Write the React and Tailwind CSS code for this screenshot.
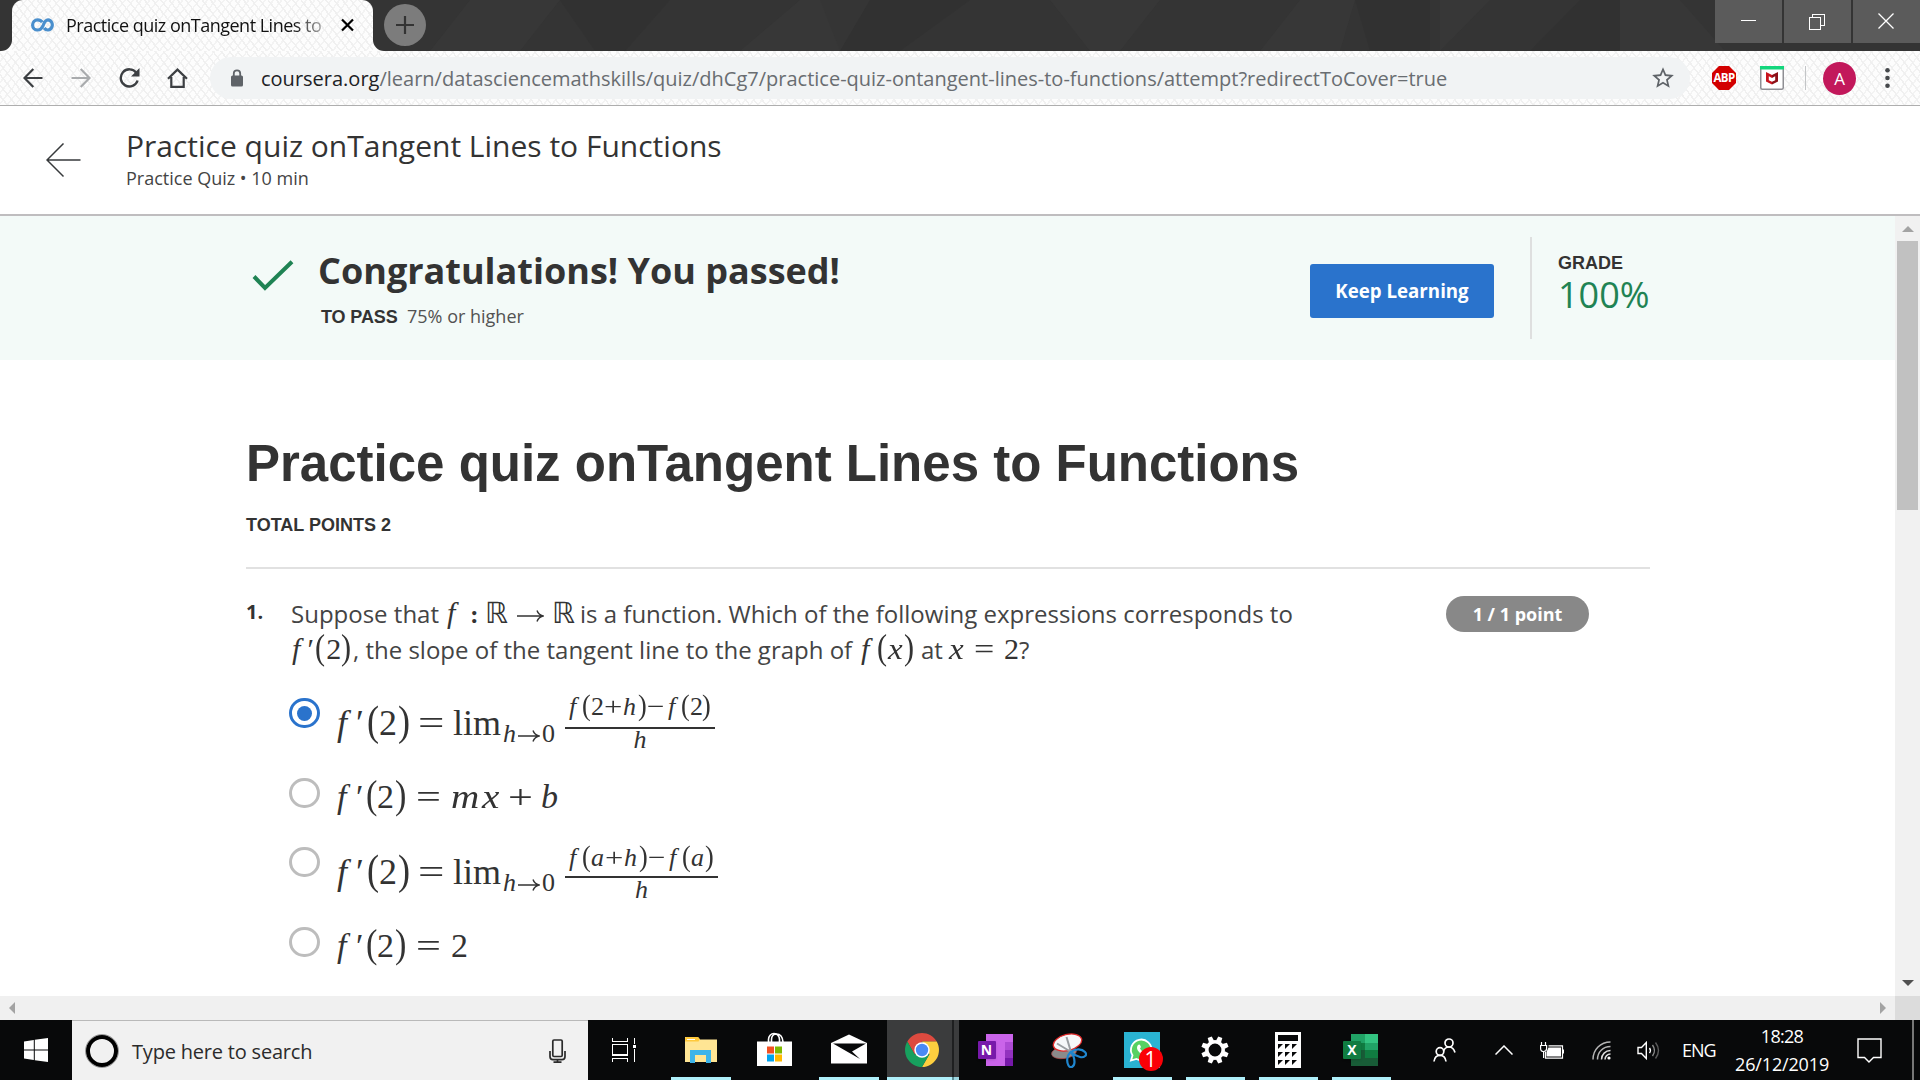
import React from "react";

/* ---------- browser chrome ---------- */

const weave =
  "bg-[#fdfdfd] bg-[repeating-linear-gradient(52deg,transparent_0px,transparent_5px,#f0f0f0_5px,#f0f0f0_6.5px),repeating-linear-gradient(-52deg,transparent_0px,transparent_5px,#f3f3f3_5px,#f3f3f3_6.5px)]";

function CourseraMark() {
  return (
    <svg width="23" height="14" viewBox="0 0 23 14" fill="none" stroke="#4a8fcd" strokeWidth="3.2">
      <path d="M11.300 4.200C10.200 2.600 8.500 1.800 6.600 1.800A4.900 5 0 0 0 6.600 12c3.200 0 4.600-2.200 5.600-4.700C13 5 14.200 1.800 17 1.800A4.500 5.100 0 1 1 13.200 10" />
    </svg>
  );
}

function TitleBar() {
  return (
    <div className="relative flex h-[51px] bg-[#343434]">
      <svg className="absolute inset-0" width="1920" height="51" viewBox="0 0 1920 51">
        <g fill="#2e2e2e" opacity="0.45">
          <path d="M560 0h110l-45 51h-30zM820 0h150l-70 51h-60zM1355 0h75v51h-60zM1530 51l50-51h40v51z" />
        </g>
        <g fill="#3b3b3b" opacity="0.4">
          <path d="M430 51l40-51h90l-40 51zM740 51l60-51h70l-30 51zM1050 0h110l-40 51h-30zM1260 51l40-51h55l-15 51zM1440 0h50l-50 51zM1620 0h60l45 51h-105z" />
        </g>
      </svg>
      <div className="relative flex w-full">
        <div className="h-[51px] w-3 bg-[#fdfdfd]">
          <div className="h-full w-full rounded-br-[11px] bg-[#343434]" />
        </div>
        <div className={`flex h-[51px] w-[361px] items-center rounded-t-[11px] pb-[2px] pl-[19px] ${weave}`}>
          <CourseraMark />
          <div className="ml-[12px] w-[258px] overflow-hidden whitespace-nowrap bg-[linear-gradient(90deg,#111_88%,#11111150_100%)] bg-clip-text text-[18px] leading-[28px] tracking-[-0.5px] text-transparent">
            Practice quiz onTangent Lines to
          </div>
          <svg className="ml-[17px]" width="13" height="14" viewBox="0 0 13 14" stroke="#000" strokeWidth="2.2">
            <path d="M1 1.500l11 11M12 1.500l-11 11" />
          </svg>
        </div>
        <div className="h-[51px] w-3 bg-[#fdfdfd]">
          <div className="h-full w-full rounded-bl-[11px] bg-[#343434]" />
        </div>
        <div className="ml-[-1px] mt-1 flex h-[42px] w-[42px] items-center justify-center rounded-full bg-[#7c7c7c]">
          <svg width="18" height="18" viewBox="0 0 18 18" stroke="#333" strokeWidth="2.2">
            <path d="M9 0v18M0 9h18" />
          </svg>
        </div>
        <div className="ml-auto flex h-[43px] gap-[2px]">
          <div className="flex w-[67px] items-center justify-center bg-[#5b5b5b]">
            <svg width="15" height="15" viewBox="0 0 15 15" shapeRendering="crispEdges">
              <path d="M0 6.500h15" stroke="#fff" />
            </svg>
          </div>
          <div className="flex w-[67px] items-center justify-center bg-[#5b5b5b] pr-[2px]">
            <svg width="16" height="16" viewBox="0 0 16 16" fill="none" stroke="#fff" shapeRendering="crispEdges">
              <path d="M.5 3.500h11v12h-11zM3.500 3.500v-3h12v11h-4" />
            </svg>
          </div>
          <div className="flex w-[67px] items-center justify-center bg-[#5b5b5b] pb-[1px] pr-[2px]">
            <svg width="16" height="16" viewBox="0 0 16 16" stroke="#fff" strokeWidth="1.300">
              <path d="M.5.5l15 15M15.500.5l-15 15" />
            </svg>
          </div>
        </div>
      </div>
    </div>
  );
}

function Toolbar() {
  return (
    <div className={`flex h-[55px] items-center border-b border-[#aeaeae] pl-[23px] ${weave}`}>
      <svg width="20" height="20" viewBox="0 0 20 20" fill="none" stroke="#3c3f42" strokeWidth="2.2">
        <path d="M19.500 10H1.800M10.300 1L1.500 10l8.800 9" />
      </svg>
      <svg className="ml-[28px]" width="20" height="20" viewBox="0 0 20 20" fill="none" stroke="#a9abad" strokeWidth="2.2">
        <path d="M.5 10h17.700M9.700 1l8.800 9-8.800 9" />
      </svg>
      <svg className="ml-[28px]" width="21" height="20" viewBox="0 0 21 20" fill="none" stroke="#3c3f42" strokeWidth="2.4">
        <path d="M17.300 4.800A8.600 8.600 0 1 0 18.600 12.500" />
        <path d="M20.500 0v8.500h-8.500z" fill="#3c3f42" stroke="none" />
      </svg>
      <svg className="ml-[27px]" width="21" height="20" viewBox="0 0 21 20" fill="none" stroke="#3c3f42" strokeWidth="2.2">
        <path d="M1 10.800L10.500 1.600l9.500 9.200M4.300 9v9.800h12.400V9" />
      </svg>
      <div className="ml-[22px] flex h-[42px] w-[1480px] items-center rounded-full bg-[#f1f3f4] pl-[20px]">
        <svg width="14" height="18" viewBox="0 0 14 18">
          <rect x="1" y="6.500" width="12" height="11" rx="1.500" fill="#5f6368" />
          <path d="M3.800 7V4.500a3.200 3.200 0 0 1 6.400 0V7" fill="none" stroke="#5f6368" strokeWidth="1.800" />
        </svg>
        <span className="ml-[17px] mt-[2px] whitespace-nowrap text-[20px] leading-[28px] text-[#696d71]">
          <span className="text-[#202124]">coursera.org</span>
          /learn/datasciencemathskills/quiz/dhCg7/practice-quiz-ontangent-lines-to-functions/attempt?redirectToCover=true
        </span>
        <svg className="ml-auto mr-[14px]" width="26" height="26" viewBox="0 0 24 24" fill="#5f6368">
          <path d="M22 9.240l-7.190-.62L12 2 9.190 8.630 2 9.240l5.460 4.730L5.820 21 12 17.270 18.180 21l-1.630-7.030L22 9.240zM12 15.400l-3.760 2.270 1-4.280-3.320-2.880 4.380-.38L12 6.100l1.710 4.040 4.380.38-3.320 2.880 1 4.280L12 15.400z" />
        </svg>
      </div>
      <div className="ml-[22px] flex h-6 w-6 items-center justify-center bg-[#d30000] text-[11.500px] font-bold leading-none tracking-[-0.6px] text-white [clip-path:polygon(29%_0,71%_0,100%_29%,100%_71%,71%_100%,29%_100%,0_71%,0_29%)]">
        ABP
      </div>
      <svg className="ml-6" width="24" height="24" viewBox="0 0 24 24">
        <rect x=".75" y=".75" width="22.500" height="22.500" rx="1.500" fill="#fff" stroke="#8f8f94" strokeWidth="1.500" />
        <path d="M0 0h24v3.500H0z" fill="#12d67c" />
        <path d="M6 6l6 3v9.500l-6-3z" fill="#c8141e" />
        <path d="M12 9l6-3v9.500l-6 3z" fill="#8d1118" />
        <path d="M8.800 10.300l3.200 1.700 3.200-1.700v3.900l-3.200 1.500-3.200-1.500z" fill="#fff" />
      </svg>
      <div className="ml-[21px] h-6 w-px bg-[#c3c5c7]" />
      <div className="ml-[17px] flex h-[33px] w-[33px] items-center justify-center rounded-full bg-[#c2185b] text-[17px] leading-none text-white">
        A
      </div>
      <svg className="ml-[29px]" width="5" height="20" viewBox="0 0 5 20" fill="#45484b">
        <circle cx="2.500" cy="2.300" r="2.300" />
        <circle cx="2.500" cy="10" r="2.300" />
        <circle cx="2.500" cy="17.700" r="2.300" />
      </svg>
    </div>
  );
}

/* ---------- math typesetting ---------- */

const T = ({ c, children }) => <span className={`inline-block ${c}`}>{children}</span>;

const Arrow = ({ w, h = 12 }) => (
  <svg className="inline-block align-baseline" width={w} height={h} viewBox={`0 0 ${w} ${h}`} fill="none" stroke="#333" strokeWidth="1.4">
    <path d={`M0 ${h / 2}H${w - 1}M${w - 7} ${h / 2 - 5.5}q1.500 4.300 6 5.500q-4.500 1.200-6 5.500`} />
  </svg>
);

function Radio({ checked, c }) {
  return (
    <div
      className={`ml-[-2px] flex h-[30px] w-[31px] shrink-0 items-center justify-center rounded-full border-[3px] ${
        checked ? "border-[#2a73cc]" : "border-[#bdbdbd]"
      } ${c}`}
    >
      {checked && <div className="h-[15px] w-[15px] rounded-full bg-[#2a73cc]" />}
    </div>
  );
}

const paren = "text-[1.17em] leading-[0.7] origin-left scale-x-[.86]";

/* f′(2) = lim h→0 with the fraction placed after it */
function Limit({ c, num, den, bar }) {
  return (
    <>
      <div className={`ml-4 w-[229px] shrink-0 whitespace-nowrap text-[36px] leading-[40px] ${c}`}>
        <T c="w-[20px] pl-[1px] italic">f</T>
        <T c="w-[11px] text-[36px] leading-[0.8]">′</T>
        <T c={`w-[12px] ${paren}`}>(</T>
        <T c="w-[19px]">2</T>
        <T c={`w-[20px] ${paren}`}>)</T>
        <T c="w-[35px] origin-left scale-x-[1.3]">=</T>
        <T c="w-[50px]">lim</T>
        <T c="w-[15px] align-[-7px] text-[26px] italic leading-none">h</T>
        <T c="w-[24px] align-[-7px] text-[26px] leading-none">
          <Arrow w={22} />
        </T>
        <T c="align-[-7px] text-[26px] leading-none">0</T>
      </div>
      <div className={`flex flex-col items-center ${bar}`}>
        {num}
        <div className="h-[2px] w-full bg-[#333]" />
        <div className={`text-[26px] italic ${den}`}>h</div>
      </div>
    </>
  );
}

function Numerator({ a, b, ac, bc, c }) {
  return (
    <div className={`w-full whitespace-nowrap pl-[3px] text-[26px] leading-[26px] ${c}`}>
      <T c="w-[14px] pl-px italic">f</T>
      <T c={`w-[9px] ${paren}`}>(</T>
      <T c={ac}>{a}</T>
      <T c="w-[19px] origin-left scale-x-[1.25]">+</T>
      <T c="w-[15px] italic">h</T>
      <T c={`w-[9px] ${paren}`}>)</T>
      <T c="w-[20px] origin-left scale-x-[1.2]">−</T>
      <T c="w-[14px] pl-px italic">f</T>
      <T c={`w-[9px] ${paren}`}>(</T>
      <T c={bc}>{b}</T>
      <T c={paren}>)</T>
    </div>
  );
}

const FPrimeTwoEq = () => (
  <>
    <T c="w-[20px] pl-[1px] italic">f</T>
    <T c="w-[10px] text-[34px] leading-[0.8]">′</T>
    <T c={`w-[11px] ${paren}`}>(</T>
    <T c="w-[18px]">2</T>
    <T c={`w-[21px] ${paren}`}>)</T>
    <T c="w-[35px] origin-left scale-x-[1.3]">=</T>
  </>
);

function Question() {
  return (
    <div className="flex">
      <div className="mt-[25px] w-[45px] text-[20px] font-bold leading-[36px] text-[#333]">1.</div>
      <div className="mt-[27px] w-[1155px]">
        <div className="flex h-[36px] items-baseline whitespace-nowrap text-[24px] leading-[36px] text-[#444]">
          <span className="w-[155px]">Suppose that</span>
          <div className="flex items-baseline font-[Liberation_Serif] text-[30px] leading-none text-[#333]">
            <T c="w-[24px] pl-[1px] italic">f</T>
            <T c="w-[15px] text-[26px] font-bold">:</T>
            <T c="w-[32px] font-[DejaVu_Sans] text-[29px] leading-[0.8]">ℝ</T>
            <T c="w-[35px]">
              <Arrow w={27} h={14} />
            </T>
            <T c="w-[28px] font-[DejaVu_Sans] text-[29px] leading-[0.8]">ℝ</T>
          </div>
          <span>is a function. Which of the following expressions corresponds to</span>
        </div>
        <div className="flex h-[36px] items-baseline whitespace-nowrap text-[24px] leading-[36px] text-[#444]">
          <div className="flex w-[62px] items-baseline font-[Liberation_Serif] text-[30px] leading-none text-[#333]">
            <T c="w-[17px] pl-[1px] italic">f</T>
            <T c="w-[8px] text-[30px] leading-[0.8]">′</T>
            <T c={`w-[11px] ${paren}`}>(</T>
            <T c="w-[15px]">2</T>
            <T c={paren}>)</T>
          </div>
          <span className="w-[507px]">, the slope of the tangent line to the graph of</span>
          <div className="flex w-[61px] items-baseline font-[Liberation_Serif] text-[30px] leading-none text-[#333]">
            <T c="w-[17px] pl-[1px] italic">f</T>
            <T c={`w-[11px] ${paren}`}>(</T>
            <T c="w-[16px] origin-left scale-x-[1.1] italic">x</T>
            <T c={paren}>)</T>
          </div>
          <span className="w-[28px]">at</span>
          <div className="flex items-baseline font-[Liberation_Serif] text-[30px] leading-none text-[#333]">
            <T c="w-[25px] origin-left scale-x-[1.1] italic">x</T>
            <T c="w-[30px] origin-left scale-x-[1.2]">=</T>
            <T c="w-[15px]">2</T>
          </div>
          <span>?</span>
        </div>

        <div className="mt-[22px] font-[Liberation_Serif] text-[#333]">
          <div className="flex h-[80px] items-start">
            <Radio checked c="mt-2" />
            <Limit
              c="mt-[13px]"
              bar="mt-[4px] w-[150px]"
              num={<Numerator c="mb-[7px]" a="2" b="2" ac="w-[13px]" bc="w-[12px]" />}
              den="leading-[22px]"
            />
          </div>
          <div className="flex h-[64px] items-start">
            <Radio c="mt-2" />
            <div className="ml-4 mt-[7px] whitespace-nowrap text-[34px] leading-[40px]">
              <FPrimeTwoEq />
              <T c="w-[31px] origin-left scale-x-[1.15] italic">m</T>
              <T c="w-[26px] origin-left scale-x-[1.15] italic">x</T>
              <T c="w-[33px] origin-left scale-x-[1.3]">+</T>
              <T c="italic">b</T>
            </div>
          </div>
          <div className="flex h-[86px] items-start">
            <Radio c="mt-[13px]" />
            <Limit
              c="mt-[18px]"
              bar="mt-[11px] w-[153px]"
              num={<Numerator c="mb-[5px]" a="a" b="a" ac="w-[14px] italic" bc="w-[14px] italic" />}
              den="leading-[24px]"
            />
          </div>
          <div className="flex h-[64px] items-start">
            <Radio c="mt-[7px]" />
            <div className="ml-4 mt-[6px] whitespace-nowrap text-[34px] leading-[40px]">
              <FPrimeTwoEq />
              <T c="">2</T>
            </div>
          </div>
        </div>
      </div>
      <div className="mt-[27px] flex h-9 w-[143px] items-center justify-center rounded-full bg-[#888] text-[18px] font-bold text-white">
        1 / 1 point
      </div>
    </div>
  );
}

/* ---------- page ---------- */

function PageHeader() {
  return (
    <div className="flex h-[110px] border-b-2 border-[#bfbdbf] bg-white pl-[46px]">
      <svg className="mt-[37px]" width="35" height="35" viewBox="0 0 35 35" fill="none" stroke="#373a3c" strokeWidth="1.5">
        <path d="M34.500 17H1M17.500.5L1 17l16.500 16.500" />
      </svg>
      <div className="ml-[45px] pt-[20px]">
        <div className="text-[30px] leading-[40px] text-[#333]">Practice quiz onTangent Lines to Functions</div>
        <div className="text-[18px] leading-[24px] text-[#444]">Practice Quiz • 10 min</div>
      </div>
    </div>
  );
}

function ResultBanner() {
  return (
    <div className="flex h-[144px] bg-[#f3faf8] pl-[252px]">
      <svg className="mt-[44px]" width="42" height="32" viewBox="0 0 42 32" fill="none" stroke="#1f8354" strokeWidth="4">
        <path d="M2 16.500L13 28 40 1.800" />
      </svg>
      <div className="ml-[24px] w-[992px] pt-[31px]">
        <div className="text-[36px] font-bold leading-[48px] text-[#333]">Congratulations! You passed!</div>
        <div className="mt-[9px] flex items-baseline pl-[3px] text-[18px] leading-[24px]">
          <span className="w-[86px] font-[Liberation_Sans] font-bold tracking-[-0.1px] text-[#333]">TO PASS</span>
          <span className="text-[#525252]">75% or higher</span>
        </div>
      </div>
      <div className="mt-[48px] flex h-[54px] w-[184px] items-center justify-center rounded-[3px] bg-[#2a73cc] text-[18.7px] font-bold text-white">
        Keep Learning
      </div>
      <div className="ml-[36px] mt-[21px] h-[102px] w-[2px] bg-[#dedfdf]" />
      <div className="ml-[26px] pt-[36px]">
        <div className="font-[Liberation_Sans] text-[18px] font-bold leading-[22px] text-[#333]">GRADE</div>
        <div className="mt-px text-[36px] leading-[40px] text-[#1f8354]">100%</div>
      </div>
    </div>
  );
}

function VerticalScroll() {
  return (
    <div className="flex w-[25px] flex-col items-center bg-[#f1f1f1]">
      <svg className="mt-[10px]" width="12" height="6" viewBox="0 0 12 6">
        <path d="M0 6L6 0l6 6z" fill="#a3a3a3" />
      </svg>
      <div className="mt-[9px] h-[269px] w-[21px] bg-[#c1c1c1]" />
      <svg className="mb-[10px] mt-auto" width="12" height="6" viewBox="0 0 12 6">
        <path d="M0 0h12L6 6z" fill="#505050" />
      </svg>
    </div>
  );
}

/* ---------- taskbar ---------- */

function Cell({ c = "w-[73px] pr-[2px]", bar, children }) {
  return (
    <div className={`relative flex h-full items-center justify-center ${c}`}>
      {children}
      {bar && <div className={`absolute bottom-0 h-[3px] bg-[#aeeffa] ${bar}`} />}
    </div>
  );
}

function Office({ letter, tile, cells }) {
  return (
    <div className="relative h-8 w-[35px]">
      <svg width="35" height="32" viewBox="0 0 35 32">
        {cells.map(([x, y, w, h, f], i) => (
          <rect key={i} x={x} y={y} width={w} height={h} fill={f} />
        ))}
      </svg>
      <div className={`absolute left-0 top-[7px] flex h-[18px] w-[18px] items-center justify-center rounded-[1px] text-[14px] font-bold leading-none text-white shadow ${tile}`}>
        {letter}
      </div>
    </div>
  );
}

function Taskbar() {
  return (
    <div className="flex h-[60px] bg-[#08090a] text-white">
      <div className="flex w-[72px] items-center justify-center">
        <svg width="24" height="24" viewBox="0 0 24 24" fill="#fff">
          <path d="M0 3.400L9.800 2v9.500H0zM10.800 1.800L24 0v11.500H10.800zM0 12.500h9.800V22L0 20.600zM10.800 12.500H24V24l-13.200-1.800z" />
        </svg>
      </div>
      <div className="flex w-[516px] items-center border-t border-[#b9b9b9] bg-[#f1f1f1] pl-[13px] text-[#2b2b2b]">
        <div className="flex h-[34px] w-[34px] items-center justify-center rounded-full border border-[#999]">
          <div className="h-[32px] w-[32px] rounded-full border-[4px] border-black" />
        </div>
        <span className="ml-[13px] mt-[2px] text-[20px] leading-[28px] tracking-[-0.2px]">Type here to search</span>
        <svg className="ml-auto mr-[22px]" width="17" height="24" viewBox="0 0 17 24" fill="none" stroke="#2b2b2b" strokeWidth="1.7">
          <rect x="3.800" y="1" width="9.400" height="16.500" rx="1.200" />
          <path d="M1 12v5.500c0 2 1 3.200 3 3.200h9c2 0 3-1.200 3-3.200V12M8.500 20.700V23M4.500 23.100h8" />
        </svg>
      </div>
      <Cell c="w-[76px] pr-[5px]">
        <svg width="26" height="24" viewBox="0 0 26 24" fill="none" stroke="#fff" strokeWidth="1.3" shapeRendering="crispEdges">
          <path d="M1.500 0v3.500h15V0M1.500 6.500h15v10.500h-15zM1.500 24v-3.500h15V24M23.500 0v6M23.500 11v13" />
          <path d="M22 7h3v3h-3z" fill="#fff" stroke="none" />
        </svg>
      </Cell>
      <Cell c="w-[74px]" bar="left-[7px] w-[60px]">
        <svg width="32" height="28" viewBox="0 0 32 28">
          <path d="M0 1h13l2 2.500h17V26H0z" fill="#ffe594" />
          <path d="M0 2.200Q0 1 1.200 1H13l1.800 2.300L13.500 5.500H0z" fill="#ffc93c" />
          <path d="M2 3h8v1H2z" fill="#fff" />
          <path d="M5 14h21v13h-5v-8H10v8H5z" fill="#3db4ea" />
        </svg>
      </Cell>
      <Cell c="w-[74px] pr-[2px]">
        <svg className="mb-[2px]" width="35" height="35" viewBox="0 0 35 35">
          <path d="M11.500 10V7.500C11.500 4 14 1.500 17 1.500s5.500 2.500 5.500 6V10M14.500 10V7.500c0-3 2-5.500 5-5.500s6 2 6.500 8" fill="none" stroke="#fff" strokeWidth="1.6" />
          <path d="M0 9.500h35V34H0z" fill="#fff" />
          <path d="M10 14.500h7v7h-7z" fill="#f25022" />
          <path d="M18 14.500h7v7h-7z" fill="#7fba00" />
          <path d="M10 22.500h7v7h-7z" fill="#00a4ef" />
          <path d="M18 22.500h7v7h-7z" fill="#ffb900" />
        </svg>
      </Cell>
      <Cell c="w-[75px] pr-[2px]" bar="left-[7px] w-[60px]">
        <svg className="mb-[3px]" width="36" height="30" viewBox="0 0 36 30">
          <path d="M0 9L18 .5 36 9v20.500H0z" fill="#fff" />
          <path d="M2 9.500h33L21 17.500l8 7.500z" fill="#08090a" />
        </svg>
      </Cell>
      <div className="flex">
        <Cell c="w-[65px] bg-[#3b3c3d] pl-[5px]" bar="left-0 w-[65px]">
          <svg width="34" height="34" viewBox="0 0 34 34">
            <path d="M17 8.500h14.700A17 17 0 0 0 2.300 8.500l7.300 12.700z" fill="#dc4a3f" />
            <path d="M24.400 21.200L17 34A17 17 0 0 0 31.700 8.500H17z" fill="#fdcf3f" />
            <path d="M9.600 21.200L2.300 8.500A17 17 0 0 0 17 34l7.400-12.800z" fill="#17a05e" />
            <circle cx="17" cy="17" r="7.700" fill="#fff" />
            <circle cx="17" cy="17" r="6.200" fill="#4a8af4" />
          </svg>
        </Cell>
        <div className="flex w-[2px] flex-col justify-end bg-[#1e1f20]">
          <div className="h-[3px] bg-[#5f8d95]" />
        </div>
        <div className="flex w-[5px] flex-col justify-end bg-[#3b3c3d]">
          <div className="h-[3px] bg-[#9cd6e0]" />
        </div>
      </div>
      <Cell c="w-[74px] pr-[2px]">
        <Office
          letter="N"
          tile="bg-[#7719aa]"
          cells={[
            [8, 0, 19, 32, "#ca64ea"],
            [27, 0, 8, 8, "#ca64ea"],
            [27, 8, 8, 8, "#ae4bd5"],
            [27, 16, 8, 8, "#9332bf"],
            [27, 24, 8, 8, "#7719aa"],
          ]}
        />
      </Cell>
      <Cell>
        <svg width="36" height="35" viewBox="0 0 36 35">
          <ellipse cx="13" cy="19.500" rx="12.500" ry="6" fill="#8b8b8b" stroke="#b04545" strokeWidth=".7" transform="rotate(-8 13 19.500)" />
          <ellipse cx="16.500" cy="9.500" rx="14.500" ry="8" fill="#f6f7f9" stroke="#e02a2a" strokeWidth="1.300" transform="rotate(-14 16.500 9.500)" />
          <path d="M15.500 4l4.500 15M6 10.500l15 9" stroke="#9a9da1" strokeWidth="2" />
          <path d="M20 19c5-4 11-3 14 0s-1 6-5 5-7-3-9-5zM19.500 19c-4 4-4 10-2 13.500s6 1 6-3.500-2-8-4-10z" fill="none" stroke="#1f86cf" strokeWidth="2.200" />
        </svg>
      </Cell>
      <Cell bar="left-[7px] w-[59px]">
        <div className="relative h-9 w-9 bg-[#2ab3d2]">
          <svg width="36" height="36" viewBox="0 0 36 36">
            <path d="M7 28.500l1.500-5.200A10.300 10.300 0 1 1 12.500 27z" fill="#57d163" stroke="#fff" strokeWidth="1.800" />
            <path d="M14 13c1-1 2-.5 2.300.4l.7 1.700-1 1.500c1 2 2.500 3.300 4.500 4.200l1.500-1.500 2.500 1.200c0 2-2 3-3.500 2.800-4-.6-8-4.300-8-7.500 0-1 .4-2 1-2.800z" fill="#fff" />
          </svg>
          <div className="absolute left-[15px] top-[15px] flex h-6 w-6 items-center justify-center rounded-full bg-[#fb0007] text-[21px] leading-none">
            1
          </div>
        </div>
      </Cell>
      <Cell bar="left-[7px] w-[59px]">
        <svg width="28" height="28" viewBox="-14 -14 28 28">
          <circle r="8.200" fill="none" stroke="#fff" strokeWidth="3.6" />
          {[22.5, 67.5, 112.5, 157.5, 202.5, 247.5, 292.5, 337.5].map((a) => (
            <path key={a} d="M-2.700-9l.5-4.800h4.400l.5 4.800z" fill="#fff" transform={`rotate(${a})`} />
          ))}
        </svg>
      </Cell>
      <Cell bar="left-[7px] w-[59px]">
        <svg width="26" height="36" viewBox="0 0 26 36">
          <path d="M0 0h26v36H0z" fill="#fff" />
          <path d="M3 3h20v6H3z" fill="#08090a" />
          {[12, 20, 28].map((y) =>
            [3, 10, 17].map((x) => <path key={`${x}-${y}`} d={`M${x} ${y}h5l-5 5z`} fill="#08090a" />)
          )}
        </svg>
      </Cell>
      <Cell bar="left-[7px] w-[59px]">
        <Office
          letter="X"
          tile="bg-[#107c41]"
          cells={[
            [8, 0, 14, 9, "#21a366"],
            [22, 0, 13, 9, "#33c481"],
            [8, 9, 14, 7, "#107c41"],
            [22, 9, 13, 7, "#21a366"],
            [8, 16, 14, 8, "#185c37"],
            [22, 16, 13, 8, "#107c41"],
            [8, 24, 27, 8, "#185c37"],
          ]}
        />
      </Cell>

      <div className="ml-[35px] flex items-center">
        <svg width="23" height="24" viewBox="0 0 23 24" fill="none" stroke="#fff" strokeWidth="1.7">
          <circle cx="16" cy="5" r="4" />
          <circle cx="7" cy="13.500" r="3.800" />
          <path d="M10.500 13c1-2.500 3-4 5.500-4s5 2 6 5.500M1 23.500c.5-4 3-6.200 6-6.200s5.500 2.200 6 6.200" />
        </svg>
        <svg className="ml-[39px]" width="18" height="10" viewBox="0 0 18 10" fill="none" stroke="#fff" strokeWidth="1.5">
          <path d="M.5 9.500L9 1l8.500 8.500" />
        </svg>
        <svg className="ml-[27px]" width="24" height="17" viewBox="0 0 24 17">
          <path d="M5.500 10v6.200h17V3.800H8.500" fill="none" stroke="#fff" strokeWidth="1.2" />
          <path d="M8.500 5.500h12.500v9H6.500V10z" fill="#fff" />
          <path d="M23 7.500h1v4h-1z" fill="#fff" />
          <path d="M1.500 0v3.500M5.500 0v3.500M.6 3.500h6v3q0 3-3 3t-3-3zM3.600 9.500V16" fill="none" stroke="#fff" strokeWidth="1.2" />
        </svg>
        <svg className="ml-[28px]" width="19" height="19" viewBox="0 0 19 19" fill="none" strokeWidth="1.5">
          <path d="M1 18.500C1 8.500 8.500 1 18.500 1M5.500 18.500c0-7.500 5.500-13 13-13" stroke="#b5b5b5" />
          <path d="M9.500 18.500c0-5 4-9 9-9M13 18.500c0-3 2.500-5.500 5.500-5.500" stroke="#ddd" />
          <circle cx="17" cy="17" r="1.600" fill="#fff" />
        </svg>
        <svg className="ml-[26px]" width="23" height="19" viewBox="0 0 23 19" fill="none" strokeWidth="1.4">
          <path d="M1 6.500h3.500L9.300 1.500v16l-4.800-5H1z" stroke="#fff" />
          <path d="M12.500 7q1.800 2.500 0 5" stroke="#fff" />
          <path d="M15.500 4q4 5.500 0 11" stroke="#8a8a8a" />
          <path d="M18.500 1.500q6 8 0 16" stroke="#5a5a5a" />
        </svg>
        <span className="ml-[22px] w-[53px] text-[18px] leading-[24px] tracking-[-1px]">ENG</span>
        <div className="w-[94px] text-center text-[18px] leading-[28px]">
          <div className="tracking-[-0.7px]">18:28</div>
          <div className="tracking-[-0.15px]">26/12/2019</div>
        </div>
        <svg className="ml-[28px]" width="25" height="25" viewBox="0 0 25 25" fill="none" stroke="#fff" strokeWidth="1.4">
          <path d="M1 1h23v18.500h-7.500L12 24l-4.500-4.500H1z" />
        </svg>
      </div>
      <div className="ml-auto mr-[6px] h-full w-[2px] bg-[#777]" />
    </div>
  );
}

export default function App() {
  return (
    <div className="h-[1080px] w-[1920px] overflow-hidden bg-white font-['Open_Sans',sans-serif]">
      <TitleBar />
      <Toolbar />
      <PageHeader />
      <div className="flex h-[780px]">
        <div className="h-full w-[1895px] overflow-hidden">
          <ResultBanner />
          <div className="ml-[246px] w-[1404px] pt-[74px]">
            <h1 className="whitespace-nowrap font-[Liberation_Sans] text-[51px] font-bold leading-[60px] text-[#333]">
              Practice quiz onTangent Lines to Functions
            </h1>
            <div className="mt-[19px] font-[Liberation_Sans] text-[18px] font-bold leading-[24px] text-[#333]">TOTAL POINTS 2</div>
            <div className="mt-[30px] h-[2px] bg-[#e1e1e1]" />
            <Question />
          </div>
        </div>
        <VerticalScroll />
      </div>
      <div className="flex h-6 items-center bg-[#f0f0f0]">
        <svg className="ml-[9px]" width="6" height="12" viewBox="0 0 6 12">
          <path d="M6 0v12L0 6z" fill="#a3a3a3" />
        </svg>
        <svg className="ml-auto mr-[9px]" width="6" height="12" viewBox="0 0 6 12">
          <path d="M0 0v12l6-6z" fill="#a3a3a3" />
        </svg>
        <div className="h-full w-[25px] bg-[#dcdcdc]" />
      </div>
      <Taskbar />
    </div>
  );
}
